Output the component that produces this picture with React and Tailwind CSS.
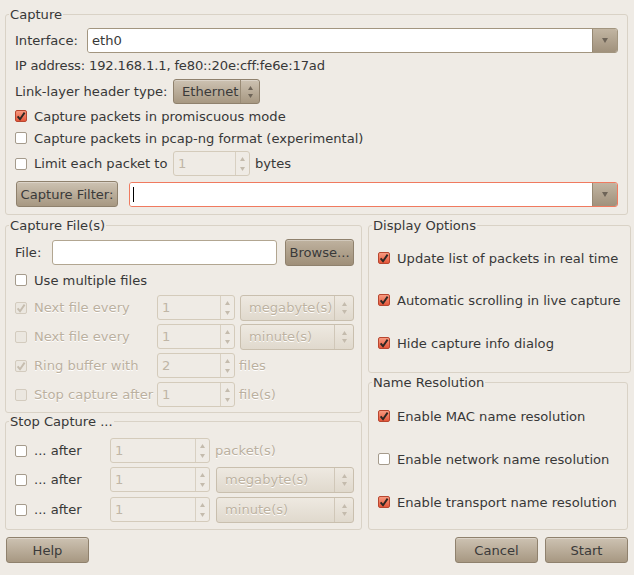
import React from 'react';

function Tri({ up, color = '#c4bbad', w = 5, h = 4 }) {
  return (
    <svg width={w} height={h} viewBox="0 0 10 8" className="block">
      <path d={up ? 'M0 8 L5 0 L10 8Z' : 'M0 0 L10 0 L5 8Z'} fill={color} />
    </svg>
  );
}

function Check({ checked, disabled }) {
  const box = disabled
    ? 'border-[#d3cbbe] bg-[#ebe7e0]'
    : checked
    ? 'border-[#b8462f] bg-gradient-to-b from-[#f7997f] to-[#e4563a]'
    : 'border-[#a59b8c] bg-white';
  return (
    <span className={`flex h-[12px] w-[12px] shrink-0 items-center justify-center rounded-[2px] border ${box}`}>
      {checked && (
        <svg viewBox="0 0 10 10" className="h-[10px] w-[10px]">
          <path d="M1.6 5.4 L4 8.2 L8.6 1.6" fill="none" stroke={disabled ? '#c6bdaf' : '#2e2723'} strokeWidth="1.9" />
        </svg>
      )}
    </span>
  );
}

function CheckRow({ checked, disabled, children, className = '' }) {
  return (
    <div className={`flex h-[16px] items-center gap-[7px] ${className}`}>
      <Check checked={checked} disabled={disabled} />
      <span className={disabled ? 'text-[#bbb09f] [text-shadow:0_1px_0_#fff]' : ''}>{children}</span>
    </div>
  );
}

function Spin({ value, className = '' }) {
  return (
    <div className={`flex h-[25px] shrink-0 rounded-[3px] border border-[#d4cbbb] ${className}`}>
      <span className="flex flex-1 items-center pl-[4px] text-[#c0b6a6]">{value}</span>
      <span className="flex w-[14px] flex-col items-center justify-center gap-[6px] border-l border-[#d8d0c2]">
        <Tri up />
        <Tri />
      </span>
    </div>
  );
}

function Combo({ label, className = '' }) {
  return (
    <div className={`flex h-[26px] rounded-[3px] border border-[#c9bfae] bg-gradient-to-b from-[#eee9e1] to-[#e0d9cd] ${className}`}>
      <span className="flex flex-1 items-center pl-[8px] text-[#bdb2a1] [text-shadow:0_1px_0_#fff]">{label}</span>
      <span className="flex w-[19px] flex-col items-center justify-center gap-[4px] border-l border-[#d0c7b8]">
        <Tri up />
        <Tri />
      </span>
    </div>
  );
}

function Button({ children, className = '', dark }) {
  const bg = dark ? 'from-[#bfb29f] to-[#9f8f79]' : 'from-[#cdc2b2] to-[#a79882]';
  return (
    <div className={`flex items-center justify-center rounded-[3px] border border-[#8f816d] bg-gradient-to-b ${bg} text-[#3a3a3a] shadow-[inset_0_1px_0_rgba(255,255,255,0.3)] ${className}`}>
      {children}
    </div>
  );
}

function DropButton() {
  return (
    <span className="flex w-[25px] items-center justify-center rounded-r-[2px] border-l border-[#968873] bg-gradient-to-b from-[#c2b5a2] to-[#a0917c]">
      <Tri color="#6e6458" w={6} h={5} />
    </span>
  );
}

function Frame({ title, className = '', pad = 'pl-[9px] pr-[9px]', children }) {
  return (
    <fieldset className={`rounded-[3px] border border-[#d9d2c6] ${className}`}>
      <legend className="ml-[3px] px-[1px] leading-[15px]">{title}</legend>
      <div className={pad}>{children}</div>
    </fieldset>
  );
}

export default function App() {
  return (
    <div className="h-[575px] w-[634px] overflow-hidden whitespace-nowrap bg-[#efebe5] pl-[5px] pr-[6px] pt-[7px] font-['DejaVu_Sans',sans-serif] text-[13.1px] leading-[15px] text-[#383838]">
      <Frame title="Capture" className="h-[208px]">
        <div className="mt-[6px] flex h-[25px] items-center">
          <span className="w-[72px]">Interface:</span>
          <div className="flex h-[25px] flex-1 rounded-[3px] border border-[#a2957f]">
            <span className="flex flex-1 items-center rounded-l-[2px] bg-white pl-[4px]">eth0</span>
            <DropButton />
          </div>
        </div>
        <div className="mt-[5px] h-[15px] tracking-[-0.16px]">IP address: 192.168.1.1, fe80::20e:cff:fe6e:17ad</div>
        <div className="mt-[6px] flex h-[25px] items-center">
          <span className="w-[158px]">Link-layer header type:</span>
          <Button className="h-[25px] w-[87px] !justify-start">
            <span className="flex-1 pl-[8px]">Ethernet</span>
            <span className="flex h-full w-[19px] flex-col items-center justify-center gap-[4px] border-l border-[#998b76]">
              <Tri up color="#6e6458" />
              <Tri color="#6e6458" />
            </span>
          </Button>
        </div>
        <CheckRow checked className="mt-[4px]">Capture packets in promiscuous mode</CheckRow>
        <CheckRow className="mt-[6px]">Capture packets in pcap-ng format (experimental)</CheckRow>
        <div className="mt-[5px] flex h-[25px] items-center">
          <div className="flex w-[158px] items-center gap-[7px]">
            <Check />
            <span>Limit each packet to</span>
          </div>
          <Spin value="1" className="w-[77px]" />
          <span className="ml-[5px]">bytes</span>
        </div>
        <div className="mt-[5px] flex h-[26px] items-center">
          <Button className="ml-[1px] h-[26px] w-[102px]">Capture Filter:</Button>
          <div className="ml-[11px] flex h-[25px] flex-1 rounded-[3px] border border-[#f07a5f]">
            <span className="flex flex-1 items-center rounded-l-[2px] bg-white pl-[3px]">
              <span className="h-[15px] w-[1px] bg-black" />
            </span>
            <DropButton />
          </div>
        </div>
      </Frame>

      <div className="mt-[3px] flex gap-[6px]">
        <div className="flex w-[357px] flex-col">
          <Frame title="Capture File(s)" className="h-[195px]" pad="pl-[9px] pr-[7px]">
            <div className="mt-[6px] flex h-[27px] items-center">
              <span className="w-[37px]">File:</span>
              <span className="h-[25px] w-[225px] rounded-[3px] border border-[#b2a691] bg-white" />
              <Button dark className="ml-[8px] h-[27px] flex-1">Browse...</Button>
            </div>
            <CheckRow className="mt-[6px]">Use multiple files</CheckRow>
            <div className="mt-[7px] flex h-[25px] items-center">
              <CheckRow checked disabled className="w-[142px]">Next file every</CheckRow>
              <Spin value="1" className="w-[78px]" />
              <Combo label="megabyte(s)" className="ml-[5px] flex-1" />
            </div>
            <div className="mt-[4px] flex h-[25px] items-center">
              <CheckRow disabled className="w-[142px]">Next file every</CheckRow>
              <Spin value="1" className="w-[78px]" />
              <Combo label="minute(s)" className="ml-[5px] flex-1" />
            </div>
            <div className="mt-[4px] flex h-[25px] items-center">
              <CheckRow checked disabled className="w-[142px]">Ring buffer with</CheckRow>
              <Spin value="2" className="w-[78px]" />
              <span className="ml-[4px] text-[#bbb09f] [text-shadow:0_1px_0_#fff]">files</span>
            </div>
            <div className="mt-[4px] flex h-[25px] items-center">
              <CheckRow disabled className="w-[142px]">Stop capture after</CheckRow>
              <Spin value="1" className="w-[78px]" />
              <span className="ml-[4px] text-[#bbb09f] [text-shadow:0_1px_0_#fff]">file(s)</span>
            </div>
          </Frame>
          <Frame title="Stop Capture ..." className="mt-[1px] h-[116px]" pad="pl-[9px] pr-[7px]">
            <div className="mt-[9px] flex h-[25px] items-center">
              <CheckRow className="w-[95px]">... after</CheckRow>
              <Spin value="1" className="w-[100px]" />
              <span className="ml-[5px] text-[#bbb09f] [text-shadow:0_1px_0_#fff]">packet(s)</span>
            </div>
            <div className="mt-[4px] flex h-[25px] items-center">
              <CheckRow className="w-[95px]">... after</CheckRow>
              <Spin value="1" className="w-[100px]" />
              <Combo label="megabyte(s)" className="ml-[6px] flex-1" />
            </div>
            <div className="mt-[5px] flex h-[25px] items-center">
              <CheckRow className="w-[95px]">... after</CheckRow>
              <Spin value="1" className="w-[100px]" />
              <Combo label="minute(s)" className="ml-[6px] flex-1" />
            </div>
          </Frame>
        </div>

        <div className="flex w-[260px] flex-col">
          <Frame title="Display Options" className="h-[155px]">
            <CheckRow checked className="mt-[17px]">Update list of packets in real time</CheckRow>
            <CheckRow checked className="mt-[26px]">Automatic scrolling in live capture</CheckRow>
            <CheckRow checked className="mt-[27px]">Hide capture info dialog</CheckRow>
          </Frame>
          <Frame title="Name Resolution" className="mt-[2px] h-[155px]">
            <CheckRow checked className="mt-[18px]">Enable MAC name resolution</CheckRow>
            <CheckRow className="mt-[27px]">Enable network name resolution</CheckRow>
            <CheckRow checked className="mt-[27px]">Enable transport name resolution</CheckRow>
          </Frame>
        </div>
      </div>

      <div className="ml-[1px] mt-[7px] flex justify-between">
        <Button className="h-[26px] w-[83px]">Help</Button>
        <div className="flex gap-[7px]">
          <Button className="h-[26px] w-[83px]">Cancel</Button>
          <Button className="h-[26px] w-[83px]">Start</Button>
        </div>
      </div>
    </div>
  );
}
